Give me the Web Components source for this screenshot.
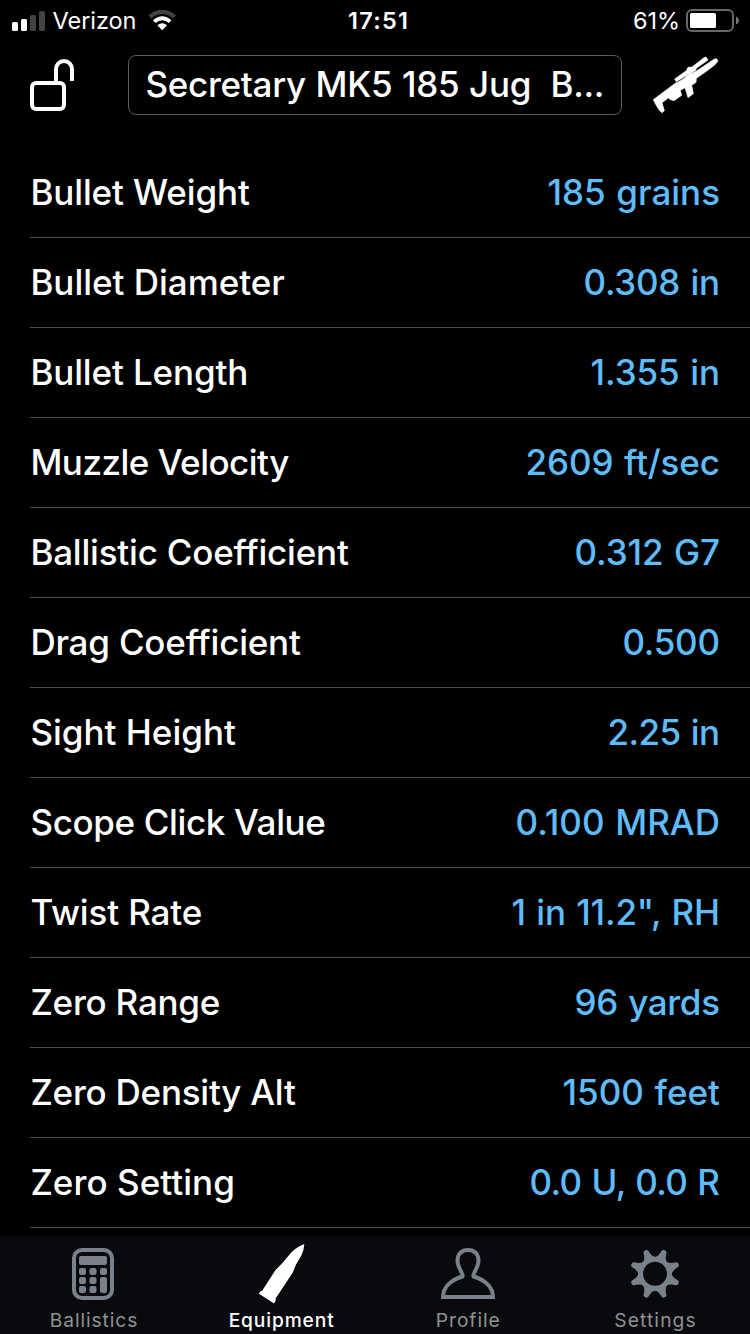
<!DOCTYPE html>
<html lang="en">
<head>
<meta charset="utf-8">
<title>Equipment</title>
<style>
html,body{margin:0;background:#000}
body{width:750px;height:1334px;overflow:hidden;font-family:Inter,"Liberation Sans",sans-serif;color:#fff}
</style>
</head>
<body>
<app-screen></app-screen>
<script>
const define=(name,html,init)=>{
  const t=document.createElement('template');t.innerHTML=html;
  customElements.define(name,class extends HTMLElement{
    constructor(){super();this.attachShadow({mode:'open'}).append(t.content.cloneNode(true));}
    connectedCallback(){if(init)init.call(this,this.shadowRoot);}
  });
};

/* One line of text tracked to fill a given advance width. */
define('fit-text',`<style>:host{display:block;flex:none;white-space:pre}span{display:inline-block}</style><span></span>`,function(r){
  const s=r.querySelector('span'),text=this.getAttribute('text'),w=+this.getAttribute('w');
  s.textContent=text;
  s.style.letterSpacing='0.001px';
  const n=text.length,gap=(w-s.getBoundingClientRect().width)/(n-1);
  s.style.letterSpacing=gap+'px';
  s.style.marginRight=-gap+'px';
});

define('status-bar',`<style>
:host{display:grid;grid-template-columns:1fr auto 1fr;align-items:center;flex:none;height:41px;padding:0 11px 0 12px;font-size:23.5px;line-height:41px}
div{display:flex;align-items:center}
.r{justify-content:flex-end}
.t{font-weight:600;padding-left:5px}
svg{display:block;flex:none}
</style>
<div><svg width="33" height="20" viewBox="0 0 33 20"><g fill="#fff"><rect y="11" width="6" height="9" rx="1.6"/><rect x="9" y="8" width="6" height="12" rx="1.6"/></g><g fill="#424242"><rect x="18" y="4" width="6" height="16" rx="1.6"/><rect x="27" y="0" width="6" height="20" rx="1.6"/></g></svg>
<fit-text text="Verizon" w="84" style="margin-left:7.5px"></fit-text>
<svg width="29" height="21" viewBox="0 0 29 21" style="margin-left:12px"><path d="M1.7 6.8Q14.2-3.2 26.7 6.8" fill="none" stroke="#424242" stroke-width="4.2"/><path d="M6.2 11.7Q14.2 4.6 22.2 11.7" fill="none" stroke="#fff" stroke-width="3.8"/><path d="M9.4 15.3Q14.2 11.3 19 15.3L14.2 20.3Z" fill="#fff"/></svg></div>
<fit-text class="t" text="17:51" w="60"></fit-text>
<div class="r"><fit-text text="61%" w="47"></fit-text>
<svg width="53" height="23" viewBox="0 0 53 23" style="margin-left:6px"><rect x="1" y="1" width="46" height="21" rx="5" fill="none" stroke="#666" stroke-width="2"/><rect x="4" y="4" width="26" height="15" rx="1.5" fill="#fff"/><path d="M50 7.5Q53 9 53 11.5T50 15.5Z" fill="#777"/></svg></div>`);

define('profile-header',`<style>
:host{display:flex;align-items:flex-start;flex:none;box-sizing:border-box;height:107px;padding:14px 0 0 30px}
.name{box-sizing:border-box;flex:none;width:494px;height:60px;margin-left:54px;border:1px solid #5c5c5c;border-radius:8px;padding-left:16.5px;line-height:56px;font-size:35px;font-weight:450;word-spacing:.7px}
svg{display:block;flex:none}
</style>
<svg width="44" height="53" viewBox="0 0 44 53" style="margin-top:4px"><g fill="none" stroke="#fff" stroke-width="4"><rect x="2" y="24" width="32" height="26" rx="4"/><path d="M26 24V10a8 8 0 0 1 16 0V22"/></g></svg>
<div class="name"><fit-text text="Secretary MK5 185 Jug  B..." w="459"></fit-text></div>
<svg width="76" height="66" viewBox="0 0 228 198" style="margin:-3px 0 0 26px" fill="#fff" stroke="#fff" stroke-width="2" stroke-linejoin="round"><path d="M16 143L28 134L60 110L90 88L110 76L125 66L141 60L198 22L206 20L210 27L200 39L175 58L145 79L144 91L131 100L136 125L120 137L111 107L97 115L101 130L78 146L65 142L62 137L42 152L49 176L42 182L34 175L22 155Z"/><path d="M80 81L115 56L120 46L132 45L168 17L174 15L180 24L146 48L142 56L120 68L85 89Z"/><path d="M86 91L112 75" stroke="#000" stroke-width="2"/><path d="M147 53L166 39" stroke="#000" stroke-width="1.5"/></svg>`);

define('spec-row',`<style>
:host{box-sizing:border-box;height:90px;margin-left:30px;padding:0 30px 2px 0;border-bottom:1px solid #4d4d4d;display:flex;justify-content:space-between;align-items:center;font-size:35px;line-height:42px;font-weight:450}
.l{padding-left:.4px}
.v{color:#5fbcfb;word-spacing:1.3px}
</style><fit-text class="l"></fit-text><fit-text class="v"></fit-text>`);

define('tab-item',`<style>
:host{flex:1;display:flex;flex-direction:column;align-items:center;color:#929292;font-size:19.2px;line-height:24px}
:host([active]){color:#fff;font-weight:500}
.i{height:72px;display:block}
::slotted(svg){display:block}
</style><div class="i"><slot></slot></div><slot name="label"></slot>`);

define('tab-bar',`<style>
:host{display:flex;flex:none;box-sizing:border-box;height:98px;padding-right:1.5px;background:#090a0e}
svg{width:80px;height:72px}
tab-item{min-width:0}
</style>
<tab-item><svg viewBox="1 0 80 72"><rect x="21" y="14" width="38" height="48" rx="8" fill="none" stroke="#79818b" stroke-width="4"/><g fill="#79818b"><rect x="26" y="20" width="28" height="9" rx="2"/><rect x="26" y="32" width="7" height="7" rx="2"/><rect x="36.5" y="32" width="7" height="7" rx="2"/><rect x="47" y="32" width="7" height="7" rx="2"/><rect x="26" y="41" width="7" height="7" rx="2"/><rect x="36.5" y="41" width="7" height="7" rx="2"/><rect x="47" y="41" width="7" height="16" rx="2"/><rect x="26" y="50" width="7" height="7" rx="2"/><rect x="36.5" y="50" width="7" height="7" rx="2"/></g></svg><fit-text slot="label" text="Ballistics" w="87.5"></fit-text></tab-item>
<tab-item active><svg viewBox="0 0 80 72"><path fill="#fff" d="M63.3 8Q63 14 60.7 18.8L54.8 29L51.8 36.5L34.6 62.5L34.8 64.5L33 67.5L18 57.7L19.3 55.3L21 55L34.5 34L41 27.5L50 16.7Q55 11.5 63.3 8Z"/></svg><fit-text slot="label" text="Equipment" w="105" style="padding-left:1px"></fit-text></tab-item>
<tab-item><svg viewBox="0 0 80 72"><path fill="none" stroke="#79818b" stroke-width="4" d="M15 61H65C65 51 57 44 45.5 40.5C44 38 50.5 32 50.5 24.5C50.5 18 46.5 14 40 14C33.5 14 29.5 18 29.5 24.5C29.5 32 36 38 34.5 40.5C23 44 15 51 15 61Z"/></svg><fit-text slot="label" text="Profile" w="64"></fit-text></tab-item>
<tab-item><svg viewBox="0 0 80 72"><g transform="translate(40 37.8)"><circle r="14.5" fill="none" stroke="#79818b" stroke-width="5"/><g id="teeth" fill="#79818b"></g></g></svg><fit-text slot="label" text="Settings" w="81.5"></fit-text></tab-item>`,function(r){
  const g=r.querySelector('#teeth');
  for(let i=0;i<8;i++){
    const p=document.createElementNS('http://www.w3.org/2000/svg','path');
    p.setAttribute('d','M-7-14.8Q-3.2-17.5-2.7-23.5Q-2.4-25.5 0-25.5T2.7-23.5Q3.2-17.5 7-14.8Z');
    p.setAttribute('transform','rotate('+(22.5+45*i)+')');
    g.append(p);
  }
});

define('app-screen',`<style>
:host{display:flex;flex-direction:column;width:750px;height:1334px;background:#000}
main{flex:1}
</style><status-bar></status-bar><profile-header></profile-header><main></main><tab-bar></tab-bar>`,function(r){
  const rows=[
    ['Bullet Weight',219.5,'185 grains',172.5],
    ['Bullet Diameter',254.5,'0.308 in',136.5],
    ['Bullet Length',218,'1.355 in',129.5],
    ['Muzzle Velocity',259,'2609 ft/sec',194.5],
    ['Ballistic Coefficient',318.5,'0.312 G7',145.5],
    ['Drag Coefficient',270.5,'0.500',97.5],
    ['Sight Height',205.5,'2.25 in',112.5],
    ['Scope Click Value',295.5,'0.100 MRAD',204.5],
    ['Twist Rate',172,'1 in 11.2", RH',208.5],
    ['Zero Range',190,'96 yards',145.5],
    ['Zero Density Alt',265.5,'1500 feet',157.5],
    ['Zero Setting',204.5,'0.0 U, 0.0 R',190.5]
  ];
  const main=r.querySelector('main');
  for(const [label,lw,value,vw] of rows){
    const row=document.createElement('spec-row');
    const [l,v]=row.shadowRoot.querySelectorAll('fit-text');
    l.setAttribute('text',label);l.setAttribute('w',lw);
    v.setAttribute('text',value);v.setAttribute('w',vw);
    main.append(row);
  }
});
</script>
</body>
</html>
